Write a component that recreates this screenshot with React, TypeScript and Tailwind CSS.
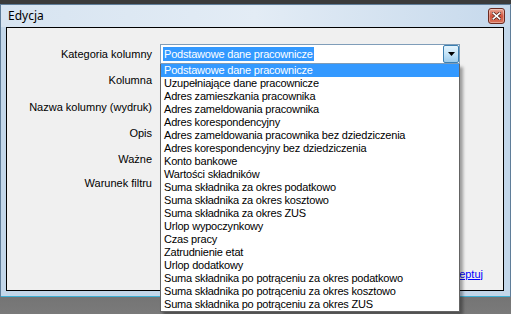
import React from 'react';

const LABELS: { text: string; mt: string }[] = [
  { text: 'Kategoria kolumny', mt: 'mt-0' },
  { text: 'Kolumna', mt: 'mt-[6px]' },
  { text: 'Nazwa kolumny (wydruk)', mt: 'mt-[7px]' },
  { text: 'Opis', mt: 'mt-[6px]' },
  { text: 'Ważne', mt: 'mt-[6px]' },
  { text: 'Warunek filtru', mt: 'mt-[4px]' },
];

const OPTIONS = [
  'Podstawowe dane pracownicze',
  'Uzupełniające dane pracownicze',
  'Adres zamieszkania pracownika',
  'Adres zameldowania pracownika',
  'Adres korespondencyjny',
  'Adres zameldowania pracownika bez dziedziczenia',
  'Adres korespondencyjny bez dziedziczenia',
  'Konto bankowe',
  'Wartości składników',
  'Suma składnika za okres podatkowo',
  'Suma składnika za okres kosztowo',
  'Suma składnika za okres ZUS',
  'Urlop wypoczynkowy',
  'Czas pracy',
  'Zatrudnienie etat',
  'Urlop dodatkowy',
  'Suma składnika po potrąceniu za okres podatkowo',
  'Suma składnika po potrąceniu za okres kosztowo',
  'Suma składnika po potrąceniu za okres ZUS',
];

function CloseButton() {
  return (
    <div className="w-[17px] h-[16px] mt-[3px] rounded-[3px] border border-[#6b2a20] bg-gradient-to-b from-[#e9a999] via-[#d0533d] to-[#d9735a] flex items-center justify-center shadow-[inset_0_0_0_1px_rgba(255,255,255,0.35)]">
      <svg width="9" height="8" viewBox="0 0 9 8">
        <path d="M1 1 L8 7 M8 1 L1 7" stroke="#4a1a12" strokeWidth="3" strokeLinecap="square" />
        <path d="M1.2 1.2 L7.8 6.8 M7.8 1.2 L1.2 6.8" stroke="#ffffff" strokeWidth="1.6" strokeLinecap="square" />
      </svg>
    </div>
  );
}

function ComboBox() {
  return (
    <div className="relative w-[300px] h-[20px] tracking-[-0.2px]">
      <div className="w-full h-full border border-[#7f9db9] bg-white flex items-center">
        <div className="flex-1 pl-[2px]">
          <span className="inline-block bg-[#3399ff] text-white px-[1px] h-[14px] leading-[14px]">
            Podstawowe dane pracownicze
          </span>
        </div>
        <div className="w-[16px] h-[18px] border border-[#3c7fb1] rounded-[2px] bg-gradient-to-b from-[#e5f4fd] via-[#c4e4f8] to-[#9ccbec] flex items-center justify-center">
          <svg width="7" height="4" viewBox="0 0 7 4">
            <path d="M0 0 H7 L3.5 4 Z" fill="#000" />
          </svg>
        </div>
      </div>
      <ul className="absolute left-0 top-[20px] w-[300px] bg-white border border-[#646464] border-t-0 shadow-[3px_3px_3px_rgba(0,0,0,0.35)] z-10">
        {OPTIONS.map((o, i) => (
          <li
            key={o}
            className={
              i === 0
                ? 'h-[13px] leading-[13px] pl-[3px] bg-[#3399ff] text-white whitespace-nowrap'
                : 'h-[13px] leading-[13px] pl-[3px] text-black whitespace-nowrap'
            }
          >
            {o}
          </li>
        ))}
      </ul>
    </div>
  );
}

export default function App() {
  return (
    <div
      className="w-[511px] h-[314px] flex flex-col bg-gradient-to-b from-[#3a3a3a] via-[#4a4a4a] to-[#7a7a7a] text-[11px] text-black"
      style={{ fontFamily: '"Liberation Sans", Arial, sans-serif' }}
    >
      <div className="h-[4px] bg-[#3b3b3b]" />
      <div className="flex flex-col border border-b-0 border-[#5f7d99] bg-[#c3d7ea]">
        <div className="h-[22px] flex items-start justify-between pl-[7px] pr-[5px] bg-gradient-to-r from-[#d7e4f1] via-[#e3ecf5] to-[#c6d9ec]">
          <span
            className="text-[12px] leading-[22px] text-black"
            style={{ fontFamily: '"Noto Sans", "Open Sans", sans-serif' }}
          >
            Edycja
          </span>
          <CloseButton />
        </div>
        <div className="flex pl-[5px] pr-[6px]">
          <div className="w-[498px] h-[264px] border border-black bg-[#f0f0f0] flex flex-col pt-[16px]">
            {LABELS.map((l, i) => (
              <div key={l.text} className={`flex items-center h-[20px] ${l.mt}`}>
                <div className="w-[145px] text-right whitespace-nowrap">{l.text}</div>
                <div className="ml-[8px]">{i === 0 ? <ComboBox /> : null}</div>
              </div>
            ))}
            <div className="flex-1" />
            <div className="flex justify-end pr-[20px] pb-[8px]">
              <span className="text-[#0000ff] underline">Akceptuj</span>
            </div>
          </div>
        </div>
        <div className="h-[5px]" />
        <div className="h-[1px] bg-[#3fb0d4]" />
      </div>
    </div>
  );
}
